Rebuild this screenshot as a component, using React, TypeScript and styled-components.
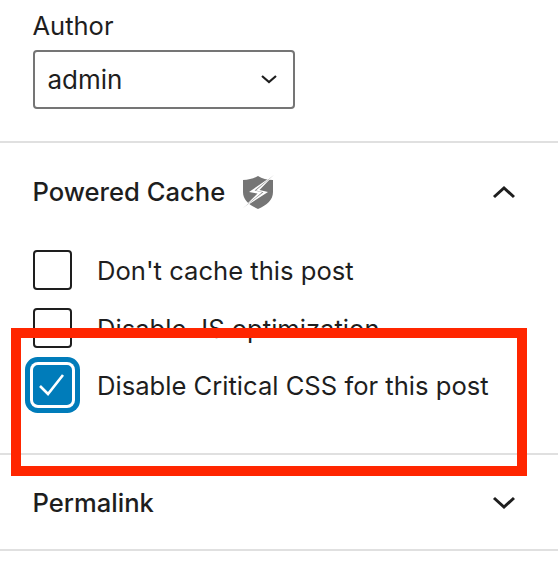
import React from "react";
import styled, { createGlobalStyle } from "styled-components";

const Global = createGlobalStyle`
  html, body { margin: 0; padding: 0; background: #fff; }
  body { font-family: Inter, "Liberation Sans", sans-serif; color: #1e1e1e; overflow: hidden; }
`;

const Page = styled.div`
  position: relative;
  width: 558px;
  height: 570px;
  overflow: hidden;
`;

const Section = styled.section<{ $height: number }>`
  height: ${(p) => p.$height}px;
  box-sizing: border-box;
  border-bottom: 2px solid #e0e0e0;
  padding: 0 33px 0 32.5px;
`;

const AuthorLabel = styled.label`
  display: block;
  padding-top: 11px;
  font-size: 25.5px;
  line-height: 30px;
  height: 39px;
`;

const SelectWrap = styled.div`
  position: relative;
  width: 262px;
  height: 59px;
`;

const Select = styled.select`
  appearance: none;
  width: 100%;
  height: 100%;
  box-sizing: border-box;
  border: 2px solid #757575;
  border-radius: 4px;
  background: #fff;
  padding: 0 13px;
  font: 400 26px Inter, "Liberation Sans", sans-serif;
  color: #1e1e1e;
`;

const SelectChevron = styled.svg`
  position: absolute;
  top: 23px;
  right: 17px;
  width: 18px;
  height: 12px;
  pointer-events: none;
`;

const PanelHeader = styled.div<{ $height: number }>`
  display: flex;
  align-items: center;
  justify-content: space-between;
  height: ${(p) => p.$height}px;
  padding-right: 9px;
`;

const PanelTitle = styled.h2`
  display: flex;
  align-items: center;
  gap: 16px;
  margin: 0;
  font-size: 25.6px;
  font-weight: 500;
  line-height: 30px;
`;

const ShieldIcon = styled.svg`
  margin-top: -3px;
  margin-bottom: -3px;
`;

const Options = styled.div`
  display: flex;
  flex-direction: column;
  margin-top: 10px;
`;

const Option = styled.div<{ $height: number }>`
  display: flex;
  align-items: flex-start;
  gap: 25px;
  height: ${(p) => p.$height}px;
`;

const Box = styled.span<{ $checked?: boolean }>`
  position: relative;
  flex: none;
  display: flex;
  align-items: center;
  justify-content: center;
  width: 39.5px;
  height: 40px;
  box-sizing: border-box;
  border-radius: 4px;
  border: 2px solid ${(p) => (p.$checked ? "#007cba" : "#1e1e1e")};
  background: ${(p) => (p.$checked ? "#007cba" : "#fff")};
  ${(p) =>
    p.$checked
      ? `box-shadow: 0 0 0 3px #fff, 0 0 0 8px #007cba; border-radius: 5px;`
      : ""}
`;

const OptionText = styled.span`
  font-size: 25.6px;
  line-height: 42px;
  white-space: nowrap;
`;

const Highlight = styled.div`
  position: absolute;
  left: 11px;
  top: 328px;
  width: 516px;
  height: 148px;
  box-sizing: border-box;
  border: 10px solid #ff2600;
  pointer-events: none;
`;

export default function App() {
  return (
    <Page>
      <Global />
      <Section $height={143}>
        <AuthorLabel htmlFor="author">Author</AuthorLabel>
        <SelectWrap>
          <Select id="author" defaultValue="admin">
            <option value="admin">admin</option>
          </Select>
          <SelectChevron viewBox="0 0 18 12" fill="none">
            <path d="M2 3 L9 9 L16 3" stroke="#1e1e1e" strokeWidth="2.2" />
          </SelectChevron>
        </SelectWrap>
      </Section>
      <Section $height={312}>
        <PanelHeader $height={97}>
          <PanelTitle>
            Powered Cache
            <ShieldIcon width="34" height="36" viewBox="0 0 34 36" aria-hidden="true">
              <path d="M17 2 C21 4.5 26 6 32 6 L32 18 C32 26 26 31 17 35 C8 31 2 26 2 18 L2 6 C8 6 13 4.5 17 2 Z" fill="#757575" />
              <path d="M33.5 0.5 L8 18 L16.5 19.5 L1.5 34.5 L27 18 L18.5 16 Z" fill="#fff" />
              <path d="M33.5 0.5 L13.5 16.5 L21 18.2 L1.5 34.5 L22.5 18.2 L15 16.4 Z" fill="#8a8a8a" />
            </ShieldIcon>
          </PanelTitle>
          <svg width="24" height="14" viewBox="0 0 24 14" fill="none" aria-hidden="true">
            <path d="M2 12 L12 3 L22 12" stroke="#1e1e1e" strokeWidth="3" />
          </svg>
        </PanelHeader>
        <Options>
          <Option $height={58}>
            <Box />
            <OptionText>Don't cache this post</OptionText>
          </Option>
          <Option $height={57}>
            <Box />
            <OptionText>Disable JS optimization</OptionText>
          </Option>
          <Option $height={40}>
            <Box $checked>
              <svg width="28" height="24" viewBox="0 0 28 24" fill="none" aria-hidden="true">
                <path d="M2 13 L10 21 L25 2" stroke="#fff" strokeWidth="2.6" />
              </svg>
            </Box>
            <OptionText>Disable Critical CSS for this post</OptionText>
          </Option>
        </Options>
      </Section>
      <Section $height={96}>
        <PanelHeader $height={96}>
          <PanelTitle>Permalink</PanelTitle>
          <svg width="24" height="14" viewBox="0 0 24 14" fill="none" aria-hidden="true">
            <path d="M2 2 L12 11 L22 2" stroke="#1e1e1e" strokeWidth="3" />
          </svg>
        </PanelHeader>
      </Section>
      <Highlight />
    </Page>
  );
}
